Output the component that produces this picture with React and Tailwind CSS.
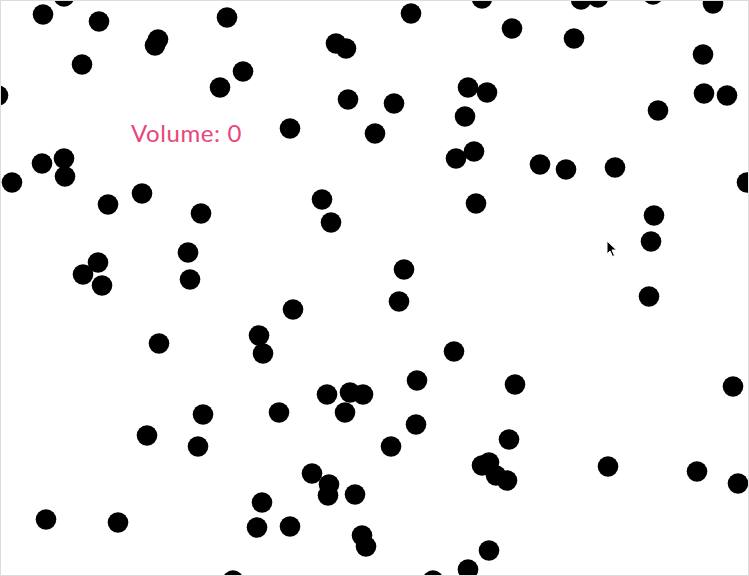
const dots = [
  [43, 14], [64, -4], [99, 21], [227, 17], [158, 39], [155, 45], [82, 64], [243, 71],
  [220, 87], [-2, 95], [42, 163], [64, 158], [65, 176], [12, 182], [142, 193],
  [482, -2], [411, 13], [336, 43], [346, 48], [348, 99], [394, 103], [468, 87],
  [487, 92], [465, 116], [290, 128], [375, 133], [474, 151], [456, 158], [322, 199],
  [581, -1], [598, -3], [653, -6], [713, 3], [512, 28], [574, 38], [703, 54],
  [704, 93], [727, 95], [658, 110], [540, 164], [566, 169], [615, 167], [747, 182],
  [108, 204], [201, 213], [188, 252], [190, 279], [98, 262], [83, 274], [102, 285],
  [159, 343], [331, 222], [476, 203], [404, 269], [399, 301], [293, 309], [259, 335],
  [263, 353], [454, 351], [417, 380], [654, 215], [651, 241], [649, 296], [515, 384],
  [733, 386], [203, 414], [147, 435], [198, 446], [46, 519], [118, 522], [233, 580],
  [327, 394], [350, 392], [363, 394], [279, 412], [345, 412], [416, 424], [391, 446],
  [509, 439], [482, 465], [489, 462], [496, 475], [507, 480], [312, 473], [329, 484],
  [328, 495], [355, 494], [262, 502], [257, 527], [290, 526], [362, 535], [366, 546],
  [489, 550], [468, 569], [433, 580], [608, 466], [697, 471], [738, 483],
];

export default function App() {
  return (
    <div className="relative w-[749px] h-[576px] overflow-hidden bg-white">
      <svg className="absolute inset-0 w-full h-full" viewBox="0 0 749 576">
        {dots.map(([x, y], i) => (
          <circle key={i} cx={x} cy={y + 0.5} r="10.3" fill="#000" />
        ))}
      </svg>

      <p
        className="absolute left-[131px] top-[121px] text-[24px] leading-none tracking-[0.6px] text-[#e8467c]"
        style={{ fontFamily: 'Lato, "Open Sans", sans-serif' }}
      >
        Volume: 0
      </p>

      {/* mouse pointer */}
      <svg className="absolute left-[606px] top-[240px] w-[12px] h-[18px]" viewBox="0 0 12 18">
        <path d="M1 1 L1 14 L4 11 L6.5 16.5 L8.5 15.5 L6 10 L10.5 10 Z" fill="#000" stroke="#fff" strokeWidth="1" />
      </svg>

      <div className="absolute inset-0 border border-[#dcdcdc] pointer-events-none" />
    </div>
  );
}
